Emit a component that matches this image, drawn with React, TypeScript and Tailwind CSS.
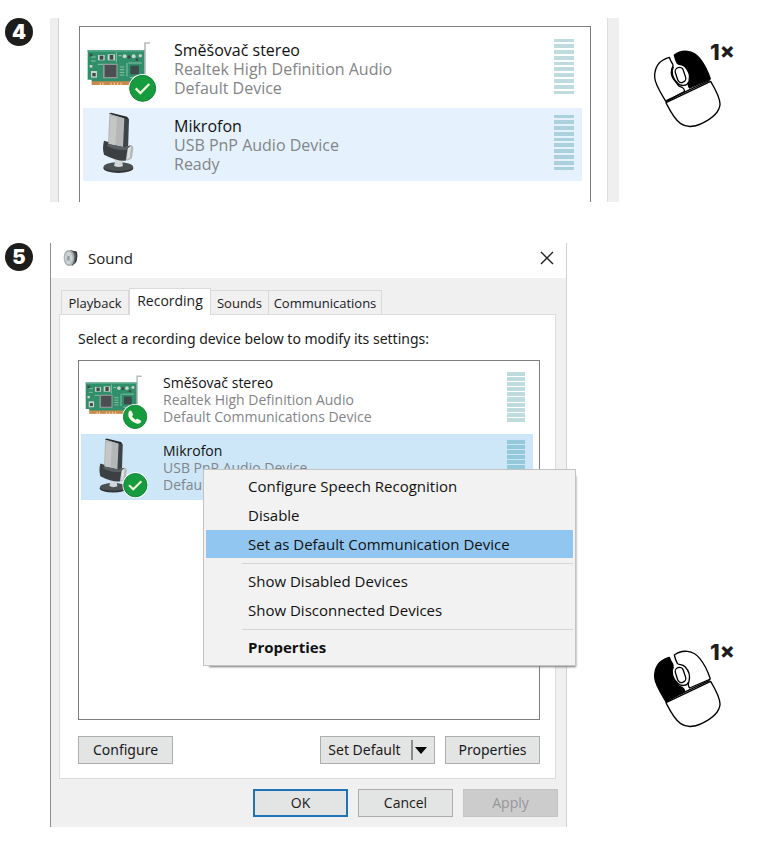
import clsx from "clsx"

type Badge = "check" | "phone" | null

function StatusBadge({ cx, cy, kind }: { cx: number; cy: number; kind: Badge }) {
  if (!kind) return null
  return (
    <g transform={`translate(${cx} ${cy})`}>
      <circle r="43" fill="#fff" />
      <circle r="39" fill="#169c3e" stroke="#0d8434" strokeWidth="3" />
      {kind === "check" ? (
        <path d="M-21 0 L-7 14 L20 -13" fill="none" stroke="#f1f8d8" strokeWidth="7" />
      ) : (
        <path
          d="M-20 -19 q4 -5 9 1 l4 9 q1 4 -3 7 q5 9 12 12 q4 -5 8 -3 l9 5 q4 4 -1 8 q-8 6 -19 0 q-16 -8 -21 -22 q-3 -11 2 -17z"
          fill="#f4fbe9"
        />
      )}
    </g>
  )
}

function SoundCardIcon({ badge, className }: { badge: Badge; className: string }) {
  return (
    <svg viewBox="22 0 210 204" className={className} aria-hidden="true">
      <path d="M211 24 H196 V138" fill="none" stroke="#b9bcbc" strokeWidth="5" />
      <rect x="36" y="136" width="118" height="14" fill="#c98a4b" />
      <path d="M62 143v8M70 143v8M94 143v8M104 143v8M114 143v8M124 143v8" stroke="#f0d3a8" strokeWidth="3" />
      <path d="M24 45 H194 V139 H36 V134 H24z" fill="#2f8f6b" />
      <path d="M24 45 H194 V50 H24z" fill="#56a888" />
      <path
        d="M34 66h14M34 78h14M54 88h16M120 96h14M120 104h14M120 112h14M120 120h14M146 84h40M116 62h10M150 128h30M110 52v30M142 84v40"
        stroke="#8cc4a4"
        strokeWidth="3"
        fill="none"
      />
      <g fill="#c9d3cc">
        <rect x="55" y="60" width="20" height="16" />
        <rect x="84" y="58" width="22" height="18" />
        <rect x="30" y="90" width="8" height="8" />
        <rect x="34" y="108" width="18" height="20" />
        <circle cx="135" cy="64" r="6" />
        <circle cx="162" cy="64" r="6" />
        <circle cx="182" cy="62" r="5" />
      </g>
      <g fill="#3d4a4a">
        <rect x="60" y="62" width="11" height="12" />
        <rect x="90" y="60" width="11" height="14" />
        <rect x="30" y="56" width="8" height="8" />
        <rect x="38" y="114" width="10" height="10" />
        <rect x="70" y="86" width="44" height="44" fill="#8d9a96" />
        <rect x="75" y="90" width="35" height="36" fill="#4c4f52" />
        <rect x="152" y="92" width="26" height="26" />
        <circle cx="148" cy="66" r="5" />
        <circle cx="172" cy="74" r="4" />
      </g>
      <StatusBadge cx={189} cy={160} kind={badge} />
    </svg>
  )
}

function MicrophoneIcon({ badge, className }: { badge: Badge; className: string }) {
  return (
    <svg viewBox="-8 17 210 204" className={className} aria-hidden="true">
      <ellipse cx="86" cy="188" rx="45" ry="15" fill="#303437" />
      <ellipse cx="86" cy="184" rx="44" ry="13" fill="#4b5053" />
      <path d="M72 158 L104 162 L98 172 L100 182 Q86 188 73 181 L76 170z" fill="#d3d7da" />
      <path d="M100 36 L118 42 L115 134 L98 130z" fill="#3e4346" />
      <path d="M58 25 L64 22 L112 34 L118 42 L104 40z" fill="#282c2f" />
      <path d="M59 26 L104 39 L100 128 L55 118z" fill="#b4b7b8" />
      <path d="M63 32 L82 37 L77 122 L58 116z" fill="#c5c7c7" />
      <path d="M108 124 L126 120 Q132 122 131 130 L127 158 Q118 168 104 164z" fill="#b3b8bb" />
      <path d="M115 125 L124 124 L120 158 L112 161z" fill="#dde0e2" />
      <path d="M43 106 L56 110 L56 116 L104 126 L124 120 L114 128 L108 166 Q82 168 43 148 Q37 128 43 106z" fill="#3c4043" />
      <path d="M56 116 L104 126 L122 121 L110 134 Q80 136 52 122z" fill="#5a5f63" />
      <StatusBadge cx={160} cy={178} kind={badge} />
    </svg>
  )
}

function SpeakerIcon() {
  return (
    <svg viewBox="0 0 48 54" className="h-[18px] w-4" aria-hidden="true">
      <path d="M22 2 L40 8 Q46 24 38 42 L26 52z" fill="#5a5f61" />
      <path d="M32 8 L40 10 Q43 26 37 40" fill="none" stroke="#2f3335" strokeWidth="4" />
      <ellipse cx="18" cy="27" rx="16" ry="24" fill="#a5adb0" />
      <ellipse cx="17" cy="27" rx="12" ry="19" fill="#cfd4d6" />
      <ellipse cx="16" cy="28" rx="5" ry="8" fill="#9aa2a6" />
      <path d="M6 12 L28 42 M6 42 L28 12" stroke="#9fa8ab" strokeWidth="1.5" />
    </svg>
  )
}

function MouseClick({ button }: { button: "left" | "right" }) {
  const left = button === "left"
  return (
    <div className="flex">
      <svg
        viewBox="38 34 207 246"
        className="h-[82px] w-[69px] shrink-0"
        stroke="#000"
        strokeWidth="4"
        strokeLinejoin="round"
        role="img"
        aria-label={`${button} mouse button`}
      >
        <path
          d="M87 68 C58 76 42 96 43 128 C44 150 62 176 77 201 L132 171 C134 160 126 158 118 155 C112 153 112 147 106 141 C95 130 91 116 94 104 C96 96 101 94 97 88 C92 82 90 76 87 68z"
          fill={left ? "#000" : "#fff"}
        />
        <path
          d="M102 61 C126 43 158 47 178 71 C192 88 204 114 210 133 L148 160 C142 154 143 148 146 140 C150 124 146 108 134 96 C126 88 116 92 111 86 C106 78 104 70 102 61z"
          fill={left ? "#fff" : "#000"}
        />
        <path
          d="M77 204 L211 140 C230 172 240 194 239 210 C236 240 206 256 185 266 C162 277 140 280 121 267 C100 252 88 226 77 204z"
          fill="#fff"
        />
        <path d="M78 198 L208 137" fill="none" />
        <path d="M99 96 C92 110 96 134 112 146 C122 156 140 154 145 142" fill="none" />
        <rect x="108" y="98" width="25" height="46" rx="12" transform="rotate(-18 120 121)" fill="#fff" />
      </svg>
      <span className="-ml-3 font-[Inter,sans-serif] text-[22px] leading-3 font-extrabold text-[#1d1d1b]">1×</span>
    </div>
  )
}

function StepNumber({ children }: { children: number }) {
  return (
    <span className="flex size-7 shrink-0 items-center justify-center rounded-full bg-[#1d1d1b] font-[Inter,sans-serif] text-xl leading-none font-black text-white">
      {children}
    </span>
  )
}

function LevelMeter({ active, className }: { active?: "soft" | "strong"; className: string }) {
  return (
    <span className={clsx("mb-1 flex shrink-0 flex-col", className)}>
      {Array.from({ length: 10 }, (_, i) => (
        <span
          key={i}
          className={clsx(
            "flex-1",
            !active && "bg-[#bedcde]",
            active === "soft" && "bg-[#abd1de]",
            active === "strong" && "bg-[#94c9dc]",
          )}
        />
      ))}
    </span>
  )
}

interface DeviceProps {
  icon: "card" | "mic"
  badge: Badge
  name: string
  lines: string[]
  large?: boolean
  highlight?: "soft" | "strong"
}

function DeviceRow({ icon, badge, name, lines, large, highlight }: DeviceProps) {
  const Icon = icon === "card" ? SoundCardIcon : MicrophoneIcon
  return (
    <li
      role="option"
      aria-selected={!!highlight}
      className={clsx(
        "flex items-center pr-2 pl-1",
        large ? "h-[73px] text-base leading-[19px]" : "h-[66px] text-sm leading-[17px]",
        highlight === "soft" && "bg-[#e5f2fd]",
        highlight === "strong" && "bg-[#cde7f9]",
      )}
    >
      <span className={clsx("shrink-0", large ? "w-[87px]" : "w-[78px]")}>
        <Icon badge={badge} className={large ? "h-[68px] w-[70px]" : "h-[61px] w-[63px]"} />
      </span>
      <span className={clsx("flex flex-1 flex-col whitespace-nowrap text-[#838587]", large && "pt-0.5")}>
        <span className="text-[#111]">{name}</span>
        {lines.map((line) => (
          <span key={line}>{line}</span>
        ))}
      </span>
      <LevelMeter active={highlight} className={large ? "h-14 w-5 gap-0.5" : "h-[50px] w-[18px] gap-px"} />
    </li>
  )
}

const buttonBase = "flex h-7 items-center justify-center border text-sm leading-5"

function ContextMenu() {
  const item = "flex h-7 w-full items-center pl-[42px] text-left"
  return (
    <div
      role="menu"
      className="absolute top-[226px] -right-[10px] left-[152px] flex flex-col gap-px border border-[#c3c3c3] bg-[#f2f2f2] px-[2px] pt-[2px] pb-1 text-[15px] leading-5 whitespace-nowrap text-[#111] shadow-[3px_4px_2px_-3px_#777]"
    >
      <button role="menuitem" className={item}>Configure Speech Recognition</button>
      <button role="menuitem" className={item}>Disable</button>
      <button role="menuitem" className={clsx(item, "bg-[#91c6f0]")}>Set as Default Communication Device</button>
      <hr className="mt-1 mb-[2px] ml-9 border-[#d5d5d5]" />
      <button role="menuitem" className={item}>Show Disabled Devices</button>
      <button role="menuitem" className={item}>Show Disconnected Devices</button>
      <hr className="mt-1 mb-[2px] ml-9 border-[#d5d5d5]" />
      <button role="menuitem" className={clsx(item, "font-bold")}>Properties</button>
    </div>
  )
}

function SoundDialog() {
  const tab = "h-6 border-t border-r border-[#d9d9d9] bg-[#f0f0f0] text-[13px]"
  return (
    <div className="relative min-w-0 flex-1 border-r border-l border-r-[#d0d0d0] border-l-[#8f8f8f] bg-[#f0f0f0] text-[#1a1a1a]">
      {/* Title bar */}
      <header className="flex h-[35px] items-center bg-white px-3 pb-[6px]">
        <SpeakerIcon />
        <h1 className="ml-[9px] flex-1 text-[15px] leading-5">Sound</h1>
        <button aria-label="Close" className="text-[#222]">
          <svg viewBox="0 0 14 14" className="size-[14px]" stroke="currentColor" strokeWidth="1.4">
            <path d="M1 1 L13 13 M13 1 L1 13" />
          </svg>
        </button>
      </header>

      <div className="px-2 py-[10px]">
        {/* Tabs */}
        <div role="tablist" className="flex items-end pl-[2px] text-sm leading-5 whitespace-nowrap">
          <button role="tab" className={clsx(tab, "w-[68px] border-l")}>Playback</button>
          <button role="tab" aria-selected="true" className="-mb-px h-[27px] w-[82px] border border-b-0 border-[#d9d9d9] bg-white pb-[3px]">
            Recording
          </button>
          <button role="tab" className={clsx(tab, "w-[58px]")}>Sounds</button>
          <button role="tab" className={clsx(tab, "w-[113px]")}>Communications</button>
        </div>

        <div role="tabpanel" className="mr-[2px] border border-[#dcdcdc] bg-white pt-[15px] pr-[15px] pb-[14px] pl-[18px]">
          <p className="font-['Noto_Sans',sans-serif] text-sm leading-[18px] whitespace-nowrap">
            Select a recording device below to modify its settings:
          </p>
          <ul role="listbox" className="mt-3 flex h-[360px] flex-col gap-0.5 border border-[#7d7d7d] pt-[5px] pr-[6px] pl-[2px]">
            <DeviceRow
              icon="card"
              badge="phone"
              name="Směšovač stereo"
              lines={["Realtek High Definition Audio", "Default Communications Device"]}
            />
            <DeviceRow
              icon="mic"
              badge="check"
              name="Mikrofon"
              lines={["USB PnP Audio Device", "Default Device"]}
              highlight="strong"
            />
          </ul>
          <div className="mt-4 flex font-['Noto_Sans',sans-serif]">
            <button className={clsx(buttonBase, "mr-auto w-[95px] border-[#adadad] bg-[#e3e4e4]")}>Configure</button>
            <button className={clsx(buttonBase, "w-[115px] border-[#adadad] bg-[#e3e4e4]")}>
              Set Default
              <span className="ml-[10px] h-5 w-0.5 bg-[#8c8c8c]" />
              <svg viewBox="0 0 12 7" className="ml-0.5 h-[7px] w-3">
                <path d="M0 0 H12 L6 7z" />
              </svg>
            </button>
            <button className={clsx(buttonBase, "ml-[10px] w-[95px] border-[#adadad] bg-[#e3e4e4]")}>Properties</button>
          </div>
        </div>

        <div className="mt-[10px] flex justify-end gap-[10px]">
          <button className={clsx(buttonBase, "w-[95px] border-2 border-[#1f74b8] bg-[#e3e4e4]")}>OK</button>
          <button className={clsx(buttonBase, "w-[95px] border-[#adadad] bg-[#e3e4e4]")}>Cancel</button>
          <button disabled className={clsx(buttonBase, "w-[95px] border-[#c4c4c4] bg-[#cccccc] text-[#979797]")}>
            Apply
          </button>
        </div>
      </div>

      <ContextMenu />
    </div>
  )
}

export default function App() {
  return (
    <main className="bg-white pt-[18px] pb-5 pl-[5px] font-['Open_Sans','Noto_Sans',sans-serif]">
      {/* Step 4: right click the microphone */}
      <section className="flex">
        <StepNumber>{4}</StepNumber>
        <div className="ml-[17px] flex min-w-0 flex-1">
          <div className="w-[9px] shrink-0 border-r border-[#d2d2d2] bg-[#eeeeee]" />
          <div className="min-w-0 flex-1 px-4 pt-2 pl-5">
            <ul role="listbox" className="flex flex-col gap-[3px] border border-b-0 border-[#7d7d7d] pt-[5px] pr-2 pb-[21px] pl-[3px]">
              <DeviceRow
                large
                icon="card"
                badge="check"
                name="Směšovač stereo"
                lines={["Realtek High Definition Audio", "Default Device"]}
              />
              <DeviceRow
                large
                icon="mic"
                badge={null}
                name="Mikrofon"
                lines={["USB PnP Audio Device", "Ready"]}
                highlight="soft"
              />
            </ul>
          </div>
          <div className="w-3 shrink-0 border-l border-[#dedede] bg-[#efefef]" />
        </div>
        <aside className="w-[154px] shrink-0 pt-7 pl-[34px]">
          <MouseClick button="right" />
        </aside>
      </section>

      {/* Step 5: set it as the default communication device */}
      <section className="mt-[41px] flex">
        <StepNumber>{5}</StepNumber>
        <div className="ml-[17px] flex min-w-0 flex-1">
          <SoundDialog />
        </div>
        <aside className="flex w-[206px] shrink-0 flex-col justify-end pb-[99px] pl-[86px]">
          <MouseClick button="left" />
        </aside>
      </section>
    </main>
  )
}
